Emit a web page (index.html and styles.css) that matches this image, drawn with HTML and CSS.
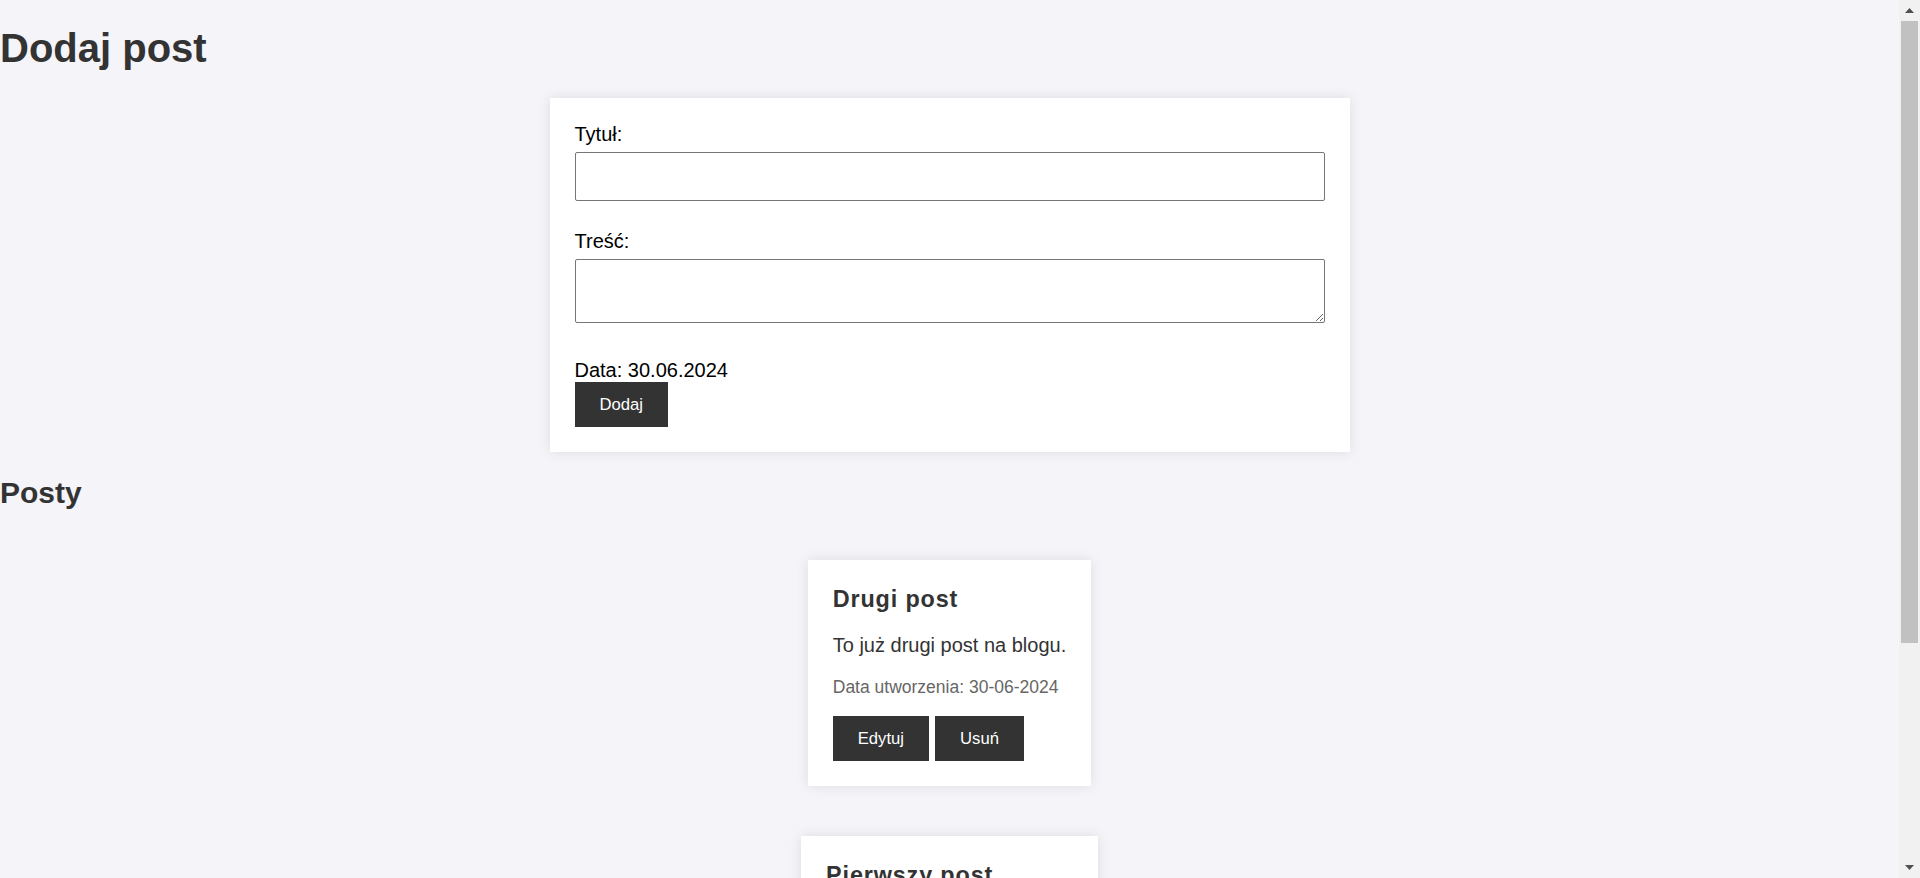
FILE: index.html
```html
<!DOCTYPE html>
<html lang="pl">
<head>
<meta charset="utf-8">
<title>Blog</title>
<link rel="stylesheet" href="styles.css">
</head>
<body>
  <main class="page">
    <h1 class="page-title">Dodaj post</h1>
    <form class="post-form">
      <label class="field-label" for="title">Tytuł:</label>
      <input class="field-input" id="title" type="text">
      <label class="field-label" for="content">Treść:</label>
      <textarea class="field-textarea" id="content"></textarea>
      <div class="form-date">Data: 30.06.2024</div>
      <button class="btn" type="button">Dodaj</button>
    </form>

    <h2 class="section-title">Posty</h2>
    <div class="posts">
      <article class="post">
        <h3 class="post-title">Drugi post</h3>
        <p class="post-content">To już drugi post na blogu.</p>
        <p class="post-date">Data utworzenia: 30-06-2024</p>
        <div class="post-actions">
          <button class="btn" type="button">Edytuj</button>
          <button class="btn" type="button">Usuń</button>
        </div>
      </article>
      <article class="post">
        <h3 class="post-title">Pierwszy post</h3>
        <p class="post-content">Mój pierwszy post na blogu.</p>
        <p class="post-date">Data utworzenia: 30-06-2024</p>
        <div class="post-actions">
          <button class="btn" type="button">Edytuj</button>
          <button class="btn" type="button">Usuń</button>
        </div>
      </article>
    </div>
  </main>

  <div class="scrollbar" aria-hidden="true">
    <div class="scroll-btn">
      <svg width="9" height="5" viewBox="0 0 9 5"><polygon points="4.5,0 9,5 0,5" fill="#505050"/></svg>
    </div>
    <div class="scroll-thumb"></div>
    <div class="scroll-space"></div>
    <div class="scroll-btn">
      <svg width="9" height="5" viewBox="0 0 9 5"><polygon points="0,0 9,0 4.5,5" fill="#505050"/></svg>
    </div>
  </div>
</body>
</html>
```
FILE: styles.css
```css
html {
  background: #f4f4f9;
}

body {
  margin: 0;
  background: #f4f4f9;
  font-family: "Liberation Sans", Arial, sans-serif;
  font-size: 20px;
  color: #333;
}

.page {
  margin-right: 21px;
  display: flow-root;
}

.page-title {
  margin: 26px 0 27px;
  font-size: 40px;
  line-height: 45px;
  font-weight: bold;
  color: #333;
}

.post-form {
  width: 800px;
  box-sizing: border-box;
  margin: 0 auto;
  padding: 25px;
  background: #fff;
  box-shadow: 0 0 12px rgba(0, 0, 0, 0.1);
  color: #000;
}

.field-label {
  display: block;
  font-size: 20px;
  line-height: 23px;
  margin-bottom: 6px;
}

.field-input,
.field-textarea {
  display: block;
  width: 100%;
  box-sizing: border-box;
  border: 1px solid #767676;
  border-radius: 2px;
  background: #fff;
  font-family: "Liberation Sans", Arial, sans-serif;
  font-size: 20px;
  padding: 12px;
  margin: 0;
}

.field-input {
  height: 49px;
  margin-bottom: 29px;
}

.field-textarea {
  height: 64px;
  margin-bottom: 35px;
  resize: vertical;
}

.form-date {
  font-size: 20px;
  line-height: 24px;
}

.btn {
  display: block;
  border: none;
  border-radius: 0;
  background: #333;
  color: #fff;
  font-family: "Liberation Sans", Arial, sans-serif;
  font-size: 16.67px;
  line-height: 20px;
  padding: 12.5px 25px;
  margin: 0;
  cursor: pointer;
}

.section-title {
  margin: 24px 0 50px;
  font-size: 30px;
  line-height: 34px;
  font-weight: bold;
  color: #333;
}

.posts {
  display: flex;
  flex-direction: column;
  align-items: center;
  gap: 50px;
  padding-bottom: 119px;
}

.post {
  background: #fff;
  padding: 25px;
  box-shadow: 0 0 12px rgba(0, 0, 0, 0.1);
  color: #333;
}

.post-title {
  margin: 0 0 21px;
  font-size: 23.4px;
  line-height: 28px;
  font-weight: bold;
  letter-spacing: 0.85px;
}

.post-content {
  margin: 0 0 20px;
  font-size: 20px;
  line-height: 23px;
}

.post-date {
  margin: 0 0 19px;
  font-size: 17.5px;
  line-height: 20px;
  color: #666;
}

.post-actions {
  display: flex;
  gap: 6px;
}

/* decorative replica of the browser's vertical scrollbar */
.scrollbar {
  position: fixed;
  top: 0;
  right: 0;
  width: 21px;
  height: 100vh;
  background: #f1f1f1;
  display: flex;
  flex-direction: column;
}

.scroll-btn {
  height: 21px;
  flex: none;
  display: flex;
  align-items: center;
  justify-content: center;
}

.scroll-btn svg {
  display: block;
}

.scroll-thumb {
  height: 622px;
  margin: 0 2px;
  background: #c1c1c1;
  flex: none;
}

.scroll-space {
  flex: 1;
}
```
